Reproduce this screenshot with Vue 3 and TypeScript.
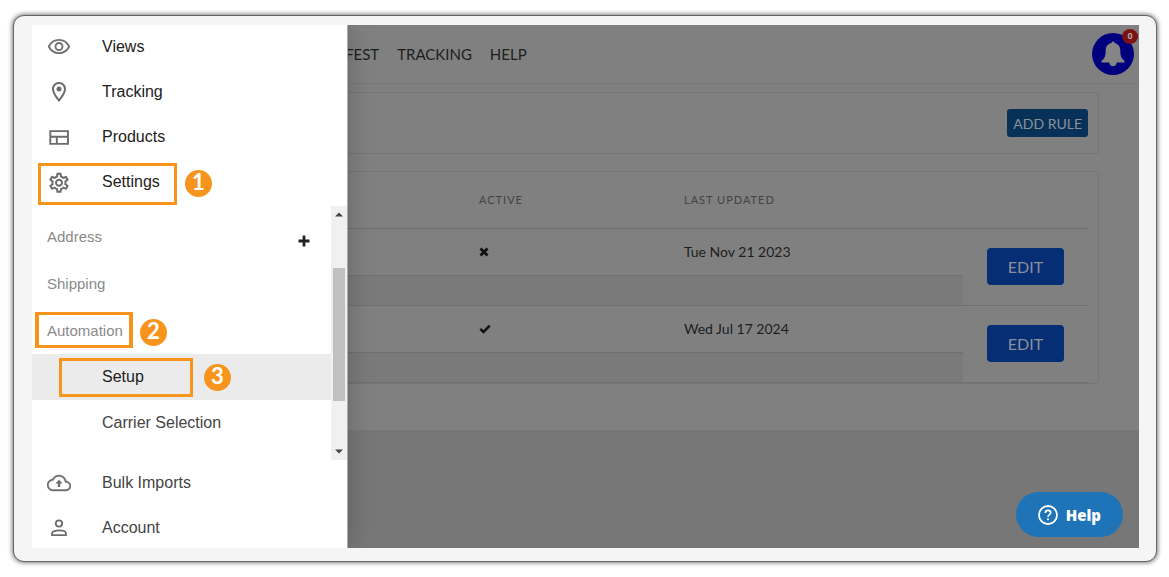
<script setup lang="ts">
interface Rule {
  id: number
  active: boolean
  updated: string
}

const navLinks: string[] = ['FEST', 'TRACKING', 'HELP']

const rules: Rule[] = [
  { id: 1, active: false, updated: 'Tue Nov 21 2023' },
  { id: 2, active: true, updated: 'Wed Jul 17 2024' },
]
</script>

<template>
  <div class="page">
    <div class="frame">
      <div class="screen">
        <nav class="drawer" aria-label="Main menu">
          <ul class="menu">
            <li class="item">
              <a href="#views">
                <span class="icon">
                  <svg width="24" height="24" viewBox="0 0 24 24" fill="none" stroke="#707070" stroke-width="1.9">
                    <path d="M1.8 11.500C3.8 7.400 7.600 4.900 12 4.900S20.200 7.400 22.200 11.500C20.200 15.600 16.400 18.100 12 18.100S3.800 15.600 1.800 11.500Z" />
                    <circle cx="12" cy="11.500" r="3.500" />
                  </svg>
                </span>
                Views
              </a>
            </li>
            <li class="item">
              <a href="#tracking">
                <span class="icon">
                  <svg width="24" height="24" viewBox="0 0 24 24" fill="#6c6c6c">
                    <path d="M12 2C8.130 2 5 5.130 5 9c0 5.250 7 13 7 13s7-7.750 7-13c0-3.870-3.130-7-7-7zM7 9c0-2.760 2.240-5 5-5s5 2.240 5 5c0 2.880-2.880 7.190-5 9.880C9.920 16.210 7 11.850 7 9z" />
                    <circle cx="12" cy="9" r="2.500" />
                  </svg>
                </span>
                Tracking
              </a>
            </li>
            <li class="item">
              <a href="#products">
                <span class="icon">
                  <svg width="24" height="24" viewBox="0 0 24 24" fill="none" stroke="#6c6c6c" stroke-width="1.9">
                    <path d="M3.300 6.100H21V18.900H3.300ZM3.300 11.800H21M9.800 11.800V18.900" />
                  </svg>
                </span>
                Products
              </a>
            </li>
            <li class="item">
              <a href="#settings">
                <span class="icon">
                  <svg width="24" height="24" viewBox="0 0 24 24" fill="#6c6c6c">
                    <path transform="translate(0 .8)" d="M19.430 12.980c.04-.32.070-.64.070-.98 0-.34-.03-.66-.07-.98l2.110-1.650c.19-.15.240-.42.120-.64l-2-3.460c-.09-.16-.26-.25-.44-.25-.06 0-.12.010-.17.030l-2.490 1c-.52-.4-1.080-.73-1.690-.98l-.38-2.650C14.460 2.180 14.250 2 14 2h-4c-.25 0-.46.180-.49.420l-.38 2.650c-.61.250-1.170.590-1.690.980l-2.490-1c-.06-.02-.12-.03-.18-.03-.17 0-.34.090-.43.250l-2 3.460c-.13.220-.07.490.12.640l2.110 1.650c-.04.320-.07.650-.07.980 0 .33.030.660.070.980l-2.110 1.650c-.19.150-.24.420-.12.640l2 3.460c.09.160.26.250.44.250.06 0 .12-.01.170-.03l2.490-1c.52.400 1.080.730 1.690.980l.38 2.650c.03.240.240.420.490.420h4c.25 0 .46-.18.490-.42l.38-2.650c.61-.25 1.170-.59 1.690-.98l2.490 1c.06.020.12.030.180.030.17 0 .34-.09.430-.25l2-3.460c.12-.22.070-.49-.12-.64l-2.110-1.650zm-1.980-1.710c.04.310.050.520.050.730 0 .21-.02.430-.05.730l-.14 1.130.89.700 1.080.840-.7 1.210-1.270-.51-1.040-.42-.9.680c-.43.320-.84.560-1.250.730l-1.060.430-.16 1.130-.2 1.350h-1.400l-.19-1.350-.16-1.130-1.060-.43c-.43-.18-.83-.41-1.230-.71l-.91-.7-1.060.430-1.270.510-.7-1.210 1.080-.84.890-.7-.14-1.130c-.03-.31-.05-.54-.05-.74s.02-.43.050-.73l.14-1.130-.89-.7-1.080-.84.700-1.210 1.270.510 1.040.420.900-.68c.43-.32.840-.56 1.250-.73l1.060-.43.160-1.130.2-1.350h1.390l.19 1.350.16 1.130 1.060.430c.43.180.830.410 1.230.710l.91.700 1.060-.43 1.270-.51.700 1.210-1.070.850-.89.700.14 1.130zM12 8c-2.210 0-4 1.790-4 4s1.790 4 4 4 4-1.790 4-4-1.790-4-4-4zm0 6c-1.100 0-2-.9-2-2s.9-2 2-2 2 .9 2 2-.9 2-2 2z" />
                  </svg>
                </span>
                Settings
              </a>
              <span class="outline outline-settings"></span>
              <span class="step step-settings">1</span>
            </li>
          </ul>

          <div class="submenu">
            <ul class="sublist">
              <li class="group">
                Address
                <button class="add" type="button" aria-label="Add address">
                  <svg width="12" height="12" viewBox="0 0 12 12"><path d="M6 .5V11.500M.5 6H11.500" stroke="#222" stroke-width="2.800" /></svg>
                </button>
              </li>
              <li class="group">Shipping</li>
              <li class="group">
                Automation
                <span class="outline outline-automation"></span>
                <span class="step step-automation">2</span>
              </li>
              <li class="entry current">
                <a href="#setup">Setup</a>
                <span class="outline outline-setup"></span>
                <span class="step step-setup">3</span>
              </li>
              <li class="entry late"><a href="#carrier">Carrier Selection</a></li>
            </ul>
            <div class="scrollbar">
              <svg width="8" height="5" viewBox="0 0 8 5"><path d="M0 4.500L4 .5L8 4.500Z" fill="#444" /></svg>
              <span class="track"><span class="thumb"></span></span>
              <svg width="8" height="5" viewBox="0 0 8 5"><path d="M0 .5H8L4 4.500Z" fill="#444" /></svg>
            </div>
          </div>

          <ul class="menu late after">
            <li class="item">
              <a href="#imports">
                <span class="icon">
                  <svg width="24" height="24" viewBox="0 0 24 24" fill="#6c6c6c">
                    <path stroke="#6c6c6c" stroke-width=".4" d="M19.350 10.040C18.670 6.590 15.640 4 12 4 9.110 4 6.600 5.640 5.350 8.040 2.340 8.360 0 10.910 0 14c0 3.310 2.690 6 6 6h13c2.760 0 5-2.240 5-5 0-2.640-2.050-4.780-4.650-4.960zM19 18.500H6c-2.480 0-4.500-2.020-4.500-4.500 0-2.330 1.760-4.230 4.010-4.470l.8-.08.370-.71C7.710 6.740 9.730 5.500 12 5.500c2.860 0 5.320 2.020 5.880 4.830l.22 1.120 1.150.080c1.840.130 3.250 1.650 3.250 3.470 0 1.930-1.570 3.500-3.500 3.500z" />
                    <path d="M12 8.700L8.400 12.600H10.800V16H13.200V12.600H15.600Z" />
                  </svg>
                </span>
                Bulk Imports
              </a>
            </li>
            <li class="item">
              <a href="#account">
                <span class="icon">
                  <svg width="24" height="24" viewBox="0 0 24 24" fill="none" stroke="#6c6c6c" stroke-width="1.800">
                    <circle cx="12" cy="7.500" r="3.200" />
                    <path d="M5 19.100V17.400C5 15.300 9 14.400 12 14.400S19 15.300 19 17.400V19.100Z" />
                  </svg>
                </span>
                Account
              </a>
            </li>
          </ul>
        </nav>

        <main class="content">
          <div class="sheet">
            <header class="topbar">
              <nav class="links" aria-label="Sections">
                <a v-for="link in navLinks" :key="link" :href="'#' + link.toLowerCase()">{{ link }}</a>
              </nav>
              <button class="bell" type="button" aria-label="Notifications">
                <svg width="24" height="26" viewBox="0 0 24 26" fill="#858585">
                  <path d="M12 0.500C12.900 .5 13.400 1.200 13.500 2.100C17.300 2.800 19.300 5.700 19.300 9.500C19.300 15 20.300 17.700 23.500 19.800V21.500H15.800C15.500 23.600 14 25.200 12 25.200S8.500 23.600 8.200 21.500H.5V19.800C3.700 17.700 4.700 15 4.700 9.500C4.700 5.700 6.700 2.800 10.500 2.100C10.600 1.200 11.100 .5 12 .5Z" />
                </svg>
                <span class="count">0</span>
              </button>
            </header>

            <section class="card toolbar">
              <button class="add-rule" type="button">ADD RULE</button>
            </section>

            <section class="card">
              <table class="rules">
                <colgroup>
                  <col class="col-name" />
                  <col class="col-active" />
                  <col />
                  <col class="col-edit" />
                </colgroup>
                <thead>
                  <tr>
                    <th></th>
                    <th scope="col">ACTIVE</th>
                    <th scope="col">LAST UPDATED</th>
                    <th></th>
                  </tr>
                </thead>
                <tbody v-for="rule in rules" :key="rule.id">
                  <tr class="summary">
                    <td></td>
                    <td>
                      <svg v-if="rule.active" width="12" height="10" viewBox="0 0 12 10" role="img" aria-label="Yes">
                        <path d="M1.300 4.900L4.500 8L10.700 1.600" fill="none" stroke="#111" stroke-width="2.600" />
                      </svg>
                      <svg v-else width="10" height="10" viewBox="0 0 10 10" role="img" aria-label="No">
                        <path d="M1.500 1.500L8.500 8.500M8.500 1.500L1.500 8.500" stroke="#111" stroke-width="2.800" />
                      </svg>
                    </td>
                    <td>{{ rule.updated }}</td>
                    <td class="action" rowspan="2"><button class="edit" type="button">EDIT</button></td>
                  </tr>
                  <tr class="detail">
                    <td colspan="3"></td>
                  </tr>
                </tbody>
              </table>
            </section>
          </div>
        </main>

        <button class="help" type="button">
          <svg width="20" height="20" viewBox="0 0 20 20" fill="none" stroke="#fff">
            <circle cx="10" cy="10" r="9" stroke-width="1.800" />
            <path d="M7.300 8C7.300 6.300 8.400 5.400 10 5.400S12.700 6.400 12.700 7.800C12.700 9.600 10 9.800 10 11.900" stroke-width="1.700" />
            <circle cx="10" cy="14.300" r="1.100" fill="#fff" stroke="none" />
          </svg>
          Help
        </button>
      </div>
    </div>
  </div>
</template>

<style>
body {
  margin: 0;
  background: #fff;
}
</style>

<style scoped>
* {
  box-sizing: border-box;
}

.page {
  display: flex;
  min-height: 100vh;
  padding: 15px 12px 15px 13px;
  font-family: "Liberation Sans", Arial, sans-serif;
}

.frame {
  display: flex;
  flex: 1;
  padding: 9px 17px 13px 18px;
  background: #f5f5f5;
  border: 1px solid #666;
  border-radius: 11px;
  box-shadow: 0 0 4px 1px rgba(0, 0, 0, 0.5);
}

.screen {
  position: relative;
  display: flex;
  flex: 1;
  overflow: hidden;
}

ul {
  margin: 0;
  padding: 0;
  list-style: none;
}

a {
  color: inherit;
  text-decoration: none;
}

button {
  padding: 0;
  border: 0;
  cursor: pointer;
}

.drawer {
  position: relative;
  z-index: 1;
  flex: 0 0 316px;
  height: 523px;
  background: #fff;
  border-right: 1px solid #aaa;
  box-shadow: 0 0 24px rgba(0, 0, 0, 0.22);
  color: #212121;
  font-size: 16px;
}

.menu {
  display: flex;
  flex-direction: column;
  gap: 2px;
}

.late {
  color: #444;
}

.after {
  margin-top: 1px;
}

.item {
  position: relative;
}

.item a {
  display: flex;
  align-items: center;
  height: 43px;
}

.icon {
  display: flex;
  justify-content: center;
  flex: 0 0 54px;
  margin-right: 16px;
}

.submenu {
  display: flex;
  height: 254px;
  margin-top: 3px;
}

.sublist {
  flex: 1;
  padding-top: 7px;
}

.group,
.entry {
  position: relative;
  display: flex;
  align-items: center;
  justify-content: space-between;
}

.group {
  height: 47px;
  padding: 0 21px 1px 15px;
  color: #8a8a8a;
  font-size: 15px;
}

.entry {
  height: 46px;
  padding-left: 70px;
}

.current {
  background: #ebebeb;
}

.add {
  display: flex;
  margin-top: 10px;
  background: none;
}

.scrollbar {
  display: flex;
  flex-direction: column;
  align-items: center;
  flex: 0 0 16px;
  padding: 6px 0;
  background: #f0f0f0;
}

.track {
  flex: 1;
  width: 12px;
  padding-top: 51px;
}

.thumb {
  display: block;
  height: 133px;
  background: #c0c0c0;
}

.outline {
  position: absolute;
  border: 3px solid #f7941e;
  pointer-events: none;
}

.outline-settings {
  top: 3px;
  left: 6px;
  width: 139px;
  height: 42px;
}

.outline-automation {
  top: 5px;
  left: 3px;
  width: 98px;
  height: 36px;
  border-width: 3px 4px;
}

.outline-setup {
  top: 4px;
  left: 27px;
  width: 134px;
  height: 39px;
}

.step {
  position: absolute;
  width: 27px;
  height: 27px;
  border-radius: 50%;
  background: #f7941e;
  color: #fff;
  font: 700 22px/24px Lato, sans-serif;
  text-align: center;
}

.step-settings {
  top: 10px;
  left: 153px;
}

.step-automation {
  top: 12px;
  left: 108px;
}

.step-setup {
  top: 10px;
  left: 172px;
}

.content {
  flex: 1;
  min-width: 0;
  background: #777;
  color: #1c1e20;
  font-family: Lato, sans-serif;
}

.sheet {
  padding-bottom: 46px;
  background: #808080;
}

.topbar {
  display: flex;
  align-items: center;
  justify-content: space-between;
  height: 59px;
  margin-bottom: 8px;
  padding-right: 5px;
  border-bottom: 1px solid #797979;
}

.links {
  display: flex;
  gap: 18px;
  margin-left: -3px;
  font-size: 15px;
}

.bell {
  position: relative;
  display: flex;
  align-items: center;
  justify-content: center;
  width: 42px;
  height: 42px;
  border-radius: 50%;
  background: #00007f;
}

.count {
  position: absolute;
  top: -4px;
  right: -4px;
  width: 16px;
  height: 15px;
  border-radius: 50%;
  background: #7d1212;
  color: #aaa;
  font: 700 9px/13px "Open Sans", sans-serif;
  text-align: center;
}

.card {
  margin-right: 40px;
  padding-right: 10px;
  border: 1px solid #757575;
  border-left: 0;
  border-radius: 0 4px 4px 0;
}

.toolbar {
  display: flex;
  justify-content: flex-end;
  margin-bottom: 17px;
  padding-top: 16px;
  padding-bottom: 16px;
}

.add-rule {
  height: 28px;
  padding: 0 6px;
  border-radius: 3px;
  background: #08315a;
  color: #8b9299;
  font: 400 14px Lato, sans-serif;
}

.rules {
  width: 100%;
  border-collapse: collapse;
  table-layout: fixed;
  font-size: 14px;
}

.col-name {
  width: 131px;
}

.col-active {
  width: 205px;
}

.col-edit {
  width: 125px;
}

th,
td {
  padding: 0;
  text-align: left;
}

th {
  height: 56px;
  border-bottom: 1px solid #6e6e6e;
  color: #414345;
  font-size: 11px;
  font-weight: 400;
  letter-spacing: 1px;
}

.summary td {
  height: 47px;
}

.detail td {
  height: 30px;
  border-top: 1px solid #707070;
  border-bottom: 1px solid #707070;
  background: #7a7a7a;
}

.summary .action {
  padding-left: 24px;
  border-bottom: 1px solid #707070;
}

.edit {
  display: block;
  width: 77px;
  height: 37px;
  border-radius: 4px;
  background: #062e75;
  color: #8b9199;
  font: 400 16px Lato, sans-serif;
}

.help {
  position: absolute;
  z-index: 2;
  right: 16px;
  bottom: 11px;
  display: flex;
  align-items: center;
  gap: 8px;
  height: 45px;
  padding: 0 22px;
  border-radius: 23px;
  background: #1f73b7;
  color: #fff;
  font: 800 15px "Open Sans", sans-serif;
}
</style>
